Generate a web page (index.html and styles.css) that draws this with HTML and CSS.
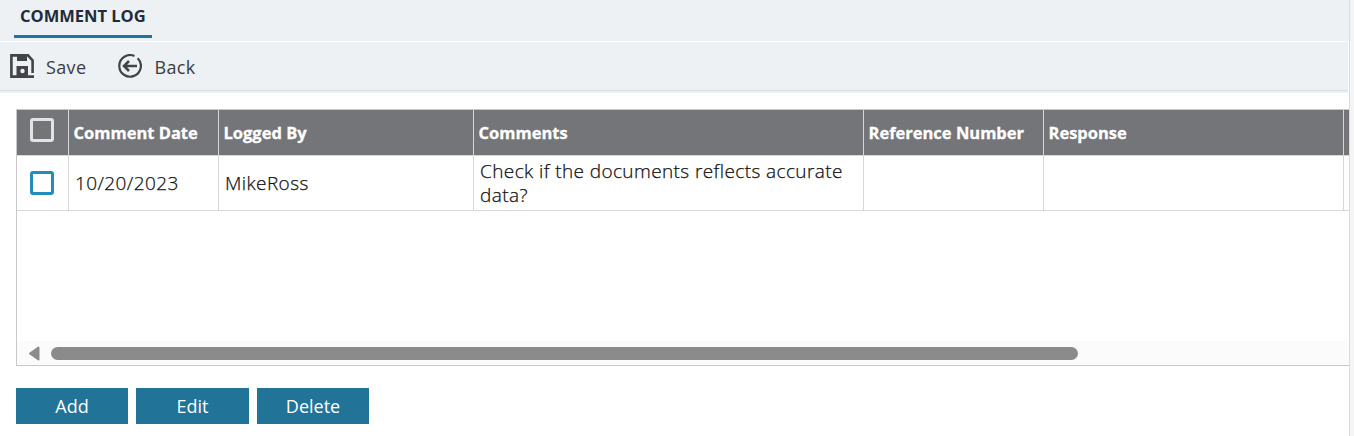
FILE: index.html
```html
<!DOCTYPE html>
<html lang="en">
<head>
<meta charset="utf-8">
<title>Comment Log</title>
<link rel="stylesheet" href="styles.css">
</head>
<body>
<main class="page">
  <nav class="tabs"><a class="tab"><span class="tab-label">COMMENT LOG</span></a></nav>
  <div class="toolbar">
    <button class="tool tool-save">
      <svg class="icon" width="24" height="24" viewBox="0 0 24 24"><path d="M24 22.6H1.4V1.4H18L22.6 6.5V19" fill="none" stroke="#434449" stroke-width="2.6"/><path d="M7 1H17V7H7ZM6.5 12H18V23H6.5Z" fill="#434449"/><circle cx="12.5" cy="17" r="2.2" fill="#edf1f4"/></svg>
      <span class="tool-label">Save</span>
    </button>
    <button class="tool tool-back">
      <svg class="icon" width="24" height="24" viewBox="0 0 24 24"><g fill="none" stroke="#434449" stroke-width="2.2"><path d="M16.5 2A10.8 10.8 0 1 0 19.7 4.2"/><path d="M19 12H6M11 7L6 12L11 17" stroke-width="2.6"/></g></svg>
      <span class="tool-label">Back</span>
    </button>
  </div>
  <section class="grid">
    <div class="row head">
      <div class="cell check"><span class="box box-head"></span></div>
      <div class="cell"><span>Comment Date</span></div>
      <div class="cell"><span>Logged By</span></div>
      <div class="cell"><span>Comments</span></div>
      <div class="cell"><span>Reference Number</span></div>
      <div class="cell"><span>Response</span></div>
      <div class="cell last"></div>
    </div>
    <div class="row data">
      <div class="cell check"><span class="box"></span></div>
      <div class="cell"><span>10/20/2023</span></div>
      <div class="cell"><span>MikeRoss</span></div>
      <div class="cell"><span>Check if the documents reflects accurate data?</span></div>
      <div class="cell"></div>
      <div class="cell"></div>
      <div class="cell last"></div>
    </div>
    <div class="scroll">
      <svg class="arrow" width="12" height="16" viewBox="0 0 12 16"><path d="M10.5 2.5V14.5L2 8.5Z" fill="#8b8b8b" stroke="#8b8b8b" stroke-width="2" stroke-linejoin="round"/></svg>
      <div class="thumb"></div>
    </div>
  </section>
  <div class="actions">
    <button class="btn">Add</button>
    <button class="btn btn-edit">Edit</button>
    <button class="btn">Delete</button>
  </div>
</main>
</body>
</html>
```
FILE: styles.css
```css
* { box-sizing: border-box; }
body { margin: 0; height: 436px; overflow: hidden; background: #f5f5f6; font-family: "Open Sans", sans-serif; }
button { border: 0; padding: 0; background: none; font-family: inherit; }
.page { width: 1350px; height: 436px; background: #fff; border-right: 1px solid #dcdcdc; }
.tabs { height: 41px; background: #edf1f4; padding-left: 14px; }
.tab { display: block; width: 138px; height: 38px; border-bottom: 3px solid #217398; padding-left: 6px; color: #212b3a; font-size: 16.5px; font-weight: 700; line-height: 32px; white-space: nowrap; }
.toolbar { display: flex; width: 1348px; height: 52px; margin-bottom: 16px; padding: 13px 0 0 10px; background: #edf1f4; border-top: 1px solid #fff; box-shadow: inset 0 -2px #edf1f4, inset 0 -3px #d7dfe3; }
.tool { display: flex; align-items: flex-start; height: 24px; color: #3b3c42; font-size: 18px; line-height: 24px; letter-spacing: .35px; }
.tool-save { width: 108px; gap: 12px; }
.tool-back { gap: 12.5px; }
.icon { display: block; flex: none; margin-top: -1px; }
.grid { width: 1333px; height: 257px; margin-left: 16px; border: solid #c8c8c8; border-width: 1px 0 1px 1px; display: flex; flex-direction: column; overflow: hidden; }
.row { display: grid; grid-template-columns: 52px 150px 255px 390px 180px 300px 5px; border-bottom: 1px solid #d7d7d9; flex: none; }
.cell { display: flex; align-items: center; border-right: 1px solid #d7d7d9; }
.cell.last { border: 0; }
.head { height: 46px; background: #747579; color: #fff; font-size: 16.5px; font-weight: 700; -webkit-text-stroke: .3px #fff; }
.head .cell { padding-left: 4.5px; }
.data { height: 55px; color: #111; font-size: 19px; font-weight: 300; line-height: 24px; letter-spacing: .4px; -webkit-text-stroke: .25px #111; }
.data .cell { padding-left: 6px; }
.row .check { justify-content: center; padding: 0 1px 0 0; }
.box { width: 24px; height: 24px; border: 3px solid #258db9; border-radius: 3px; background: #fff; }
.box-head { border-color: #e3e3e4; background: transparent; margin-bottom: 5px; }
.scroll { margin-top: auto; height: 24px; display: flex; align-items: center; padding-left: 11px; gap: 11px; background: #fbfbfb; }
.thumb { width: 1027px; height: 13px; border-radius: 7px; background: #8b8b8b; }
.actions { display: flex; gap: 8px; margin: 22px 0 0 16px; }
.btn { width: 112px; height: 36px; background: #217398; color: #fff; font-size: 18px; line-height: 36px; }
.btn-edit { width: 113px; }
```
